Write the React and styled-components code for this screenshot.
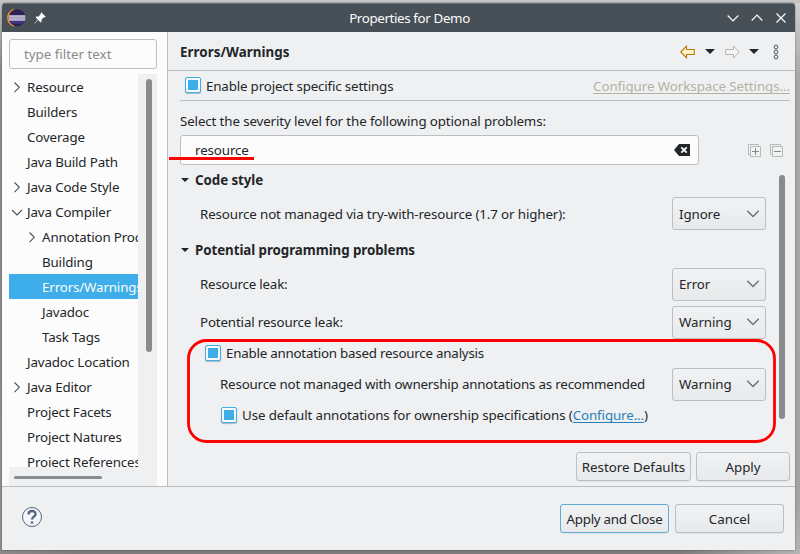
import React from "react";
import styled, { createGlobalStyle, css } from "styled-components";

const GlobalStyle = createGlobalStyle`
  * { box-sizing: border-box; }
  body {
    margin: 0;
    width: 800px;
    height: 554px;
    overflow: hidden;
    font-family: "Noto Sans", sans-serif;
    font-size: 13.33px;
    line-height: 18px;
    color: #232629;
    background: #9c9a9a;
  }
`;

const Desktop = styled.div`
  width: 800px;
  height: 554px;
  padding: 3px 5px 4px 2px;
  background:
    linear-gradient(to bottom, #c8c8c8, #c0c0c0) 0 0 / 800px 3px no-repeat,
    linear-gradient(to right, #8b8989, #7d7b7b 10%, #7d7b7b 85%, #b5b4b4) 0 550px / 800px 4px no-repeat,
    linear-gradient(to bottom, #d2d2d2, #aaa8a7 14%, #a5a3a1 90%, #b5b4b4) 795px 0 / 5px 554px no-repeat,
    linear-gradient(to bottom, #c4c4c4, #8e8e8e 12%, #929090);
`;

const Window = styled.div`
  position: relative;
  display: flex;
  flex-direction: column;
  width: 793px;
  height: 547px;
  background: #eff0f1;
  border-radius: 4px 4px 0 0;
  overflow: hidden;
  box-shadow: 0 0 2px rgba(0, 0, 0, 0.45);
`;

const TitleBar = styled.header`
  display: flex;
  align-items: center;
  height: 29px;
  flex: none;
  padding: 0 8px 1px 3px;
  background: #475057;
  border-top: 1px solid #657078;
  color: #fcfcfc;
`;

const TitleSide = styled.div`
  display: flex;
  align-items: center;
  width: 84px;
  gap: ${(p) => p.$gap}px;
  justify-content: ${(p) => (p.$end ? "flex-end" : "flex-start")};
`;

const Title = styled.div`
  flex: 1;
  padding-left: 27px;
  text-align: center;
  letter-spacing: -0.36px;
`;

const Body = styled.div`
  display: flex;
  height: 455px;
  flex: none;
  border-bottom: 1px solid #bcbec0;
`;

const Sidebar = styled.aside`
  display: flex;
  flex-direction: column;
  width: 166px;
  flex: none;
  padding: 7px 10px 0 7px;
  gap: 5px;
  background: #fcfcfc;
  border-right: 1px solid #bcbec0;
`;

const Field = styled.div`
  display: flex;
  align-items: center;
  width: ${(p) => p.$width}px;
  height: 30px;
  flex: none;
  padding: 0 8px 1px 14px;
  background: #fcfcfc;
  border: 1px solid #bcbec0;
  border-radius: 3px;
  color: ${(p) => (p.$placeholder ? "#898b8d" : "#232629")};
`;

const Spacer = styled.div`
  flex: 1;
`;

const TreeArea = styled.div`
  display: grid;
  grid-template-columns: 129px 19px;
  grid-template-rows: 393px 19px;
  background: #eff0f1;
`;

const Tree = styled.div`
  overflow: hidden;
  background: #fcfcfc;
  letter-spacing: -0.14px;
`;

const TreeRow = styled.div`
  display: flex;
  align-items: center;
  height: 25px;
  padding-left: ${(p) => 3 + p.$depth * 15}px;
  white-space: nowrap;
  ${(p) =>
    p.$selected &&
    css`
      background: #3daee9;
      color: #fcfcfc;
    `}
`;

const Twisty = styled.svg`
  width: 10px;
  height: 12px;
  margin-right: 5px;
  flex: none;
  overflow: visible;
  fill: none;
  stroke: #4d5052;
  stroke-width: 1.1;
`;

const VThumb = styled.div`
  width: 6px;
  height: ${(p) => p.$length}px;
  border-radius: 3px;
  background: #898b8d;
`;

const TreeVTrack = styled.div`
  padding: 5px 0 0 8px;
`;

const TreeHTrack = styled.div`
  padding: 9px 0 0 5px;
`;

const HThumb = styled.div`
  width: 88px;
  height: 3px;
  border-radius: 2px;
  background: #898b8d;
`;

const Main = styled.main`
  display: flex;
  flex-direction: column;
  width: 627px;
`;

const PageHeader = styled.div`
  display: flex;
  align-items: center;
  height: 39px;
  flex: none;
  padding: 1px 16px 0 12px;
  border-bottom: 1px solid #bcbec0;
`;

const Heading = styled.h1`
  margin: 0;
  font-size: 13.33px;
  font-weight: 700;
  letter-spacing: 0.06px;
`;

const Nav = styled.div`
  display: flex;
  align-items: center;
  margin-left: auto;
`;

const Page = styled.div`
  display: flex;
  flex-direction: column;
  padding: 0 5px 0 12px;
`;

const ProjectRow = styled.div`
  display: flex;
  align-items: center;
  height: 30px;
  padding-left: 5px;
  border-bottom: 1px solid #bcbec0;
`;

const CheckLabel = styled.div`
  display: flex;
  align-items: center;
  gap: 5px;
  white-space: nowrap;
`;

const Text = styled.span`
  letter-spacing: ${(p) => p.$track}px;
  white-space: nowrap;
`;

const Box = styled.span`
  display: block;
  width: 16px;
  height: 16px;
  flex: none;
  margin-top: -1px;
  padding: 2px;
  border: 1px solid #3daee9;
  border-radius: 2px;
  background: #3daee9 content-box;
  box-shadow: 0 1px 1px rgba(0, 0, 0, 0.25), inset 0 0 0 2px #f8f9fa;
`;

const Link = styled.span`
  color: ${(p) => (p.$muted ? "#b5b0a3" : "#2980b9")};
  letter-spacing: ${(p) => (p.$muted ? "-0.07px" : "inherit")};
  text-decoration: underline;
  text-underline-offset: 2px;
  text-decoration-thickness: 1px;
  text-decoration-skip-ink: none;
`;

const Prompt = styled.div`
  height: 34px;
  padding-top: 11px;
`;

const SearchRow = styled.div`
  display: flex;
  align-items: center;
  height: 30px;
`;

const TreeTools = styled.div`
  display: flex;
  gap: 9px;
  margin-left: 49px;
`;

const Scroller = styled.div`
  display: flex;
  height: 281px;
  padding-right: 5px;
  justify-content: space-between;
`;

const Options = styled.div`
  display: flex;
  flex-direction: column;
  width: 586px;
`;

const ScrollTrack = styled.div`
  padding-top: 10px;
`;

const Section = styled.h2`
  display: flex;
  align-items: center;
  gap: 6px;
  height: 30px;
  margin: 0;
  padding-left: 1px;
  font-size: 13.33px;
  font-weight: 700;
  letter-spacing: -0.06px;

  div + & {
    margin-top: 3px;
  }
`;

const Option = styled.div`
  display: flex;
  align-items: center;
  justify-content: space-between;
  height: ${(p) => p.$height}px;
  padding-left: ${(p) => p.$indent}px;
  white-space: nowrap;
`;

const buttonFace = css`
  border: 1px solid #bcbec0;
  border-radius: 3px;
  background: linear-gradient(#f1f2f3, #e8e9ea);
`;

const Select = styled.div`
  ${buttonFace}
  display: flex;
  align-items: center;
  justify-content: space-between;
  width: 94px;
  height: 33px;
  padding: 0 6px;
  letter-spacing: -0.1px;
`;

const Button = styled.div`
  ${buttonFace}
  display: flex;
  align-items: center;
  justify-content: center;
  width: ${(p) => p.$width}px;
  height: 29px;
  white-space: nowrap;
  box-shadow: 0 1px 0 rgba(0, 0, 0, 0.05);
  ${(p) => p.$primary && "border-color: #60acd3; letter-spacing: -0.26px;"}
`;

const PageButtons = styled.div`
  display: flex;
  justify-content: flex-end;
  gap: 5px;
  padding-top: 6px;
`;

const Footer = styled.footer`
  display: flex;
  align-items: center;
  flex: 1;
  gap: 6px;
  padding: 0 11px 0 19px;
`;

const HelpIcon = styled.svg`
  width: 22px;
  height: 22px;
  margin-bottom: 3px;
  fill: none;
  stroke: #536480;
`;

const Underline = styled.div`
  position: absolute;
  left: 167px;
  top: 154px;
  width: 85px;
  height: 3px;
  background: #fe0000;
`;

const Outline = styled.svg`
  position: absolute;
  left: 184px;
  top: 334px;
  width: 592px;
  height: 108px;
  fill: none;
  stroke: #fe0000;
`;

const tree = [
  ["Resource", 0, "closed"],
  ["Builders", 0],
  ["Coverage", 0],
  ["Java Build Path", 0],
  ["Java Code Style", 0, "closed"],
  ["Java Compiler", 0, "open"],
  ["Annotation Processing", 1, "closed"],
  ["Building", 1],
  ["Errors/Warnings", 1],
  ["Javadoc", 1],
  ["Task Tags", 1],
  ["Javadoc Location", 0],
  ["Java Editor", 0, "closed"],
  ["Project Facets", 0],
  ["Project Natures", 0],
  ["Project References", 0],
];

const twistyPath = { closed: "M2.5 1.5L7.3 6.3L2.5 11.1", open: "M0 4L5 9L10 4" };

function Eclipse() {
  return (
    <svg width="21" height="20" viewBox="0 0 21 20">
      <path d="M9 1.3A8.8 8.8 0 0 0 9 18.2A10.5 10.5 0 0 1 9 1.3Z" fill="#f7941e" stroke="#f7941e" strokeWidth="1" />
      <circle cx="12" cy="9.8" r="8.5" fill="#2c2255" />
      <path d="M4 12.5H20A8.5 8.5 0 0 1 18 15.5H6Z" fill="#423484" />
      <path d="M4 6.9H20L20.4 9.8L20 12.9H4L3.6 9.8Z" fill="#a49fc2" />
      <path d="M3.8 8.4H20.2M3.8 11H20.2" stroke="#c4bfd6" strokeWidth=".8" />
    </svg>
  );
}

function Pin() {
  return (
    <svg width="12" height="12" viewBox="0 0 12 12">
      <path d="M7.2.3L11.7 4.8L10.5 5.4L9.9 5.2L7.6 7.5L7.5 9.7L6.6 10.4L4.2 8L.8 11.6L.4 11.2L3.8 7.7L1.6 5.4L2.3 4.5L4.5 4.4L6.8 2.1L6.6 1.5Z" fill="#fcfcfc" />
    </svg>
  );
}

function WindowIcon({ d }) {
  return (
    <svg width="12" height="12" viewBox="0 0 12 12" fill="none" stroke="#fcfcfc" strokeWidth="1.2">
      <path d={d} />
    </svg>
  );
}

function Arrow({ back }) {
  return (
    <svg width="15" height="14" viewBox="0 0 15 14">
      <defs>
        <linearGradient id="gold" x2="0" y2="1">
          <stop stopColor="#fffdf0" />
          <stop offset="1" stopColor="#ffe59a" />
        </linearGradient>
      </defs>
      {back ? (
        <path d="M.8 7L6.5 1.1V4.5H14.3V9.5H6.5V12.9Z" fill="url(#gold)" stroke="#b8791a" strokeWidth="1.1" />
      ) : (
        <path d="M14.2 7L8.5 1.1V4.5H.7V9.5H8.5V12.9Z" fill="#f5f5f5" stroke="#b2b2b2" />
      )}
    </svg>
  );
}

const Gap = styled.span`
  width: ${(p) => p.$w}px;
`;

function Caret({ w = 10, h = 5 }) {
  return (
    <svg width={w} height={h} viewBox="0 0 10 5" preserveAspectRatio="none">
      <path d="M0 0H10L5 5Z" fill="#232629" />
    </svg>
  );
}

function TreeToggle({ plus }) {
  return (
    <svg width="13" height="13" viewBox="0 0 13 13" fill="none" stroke="#b7b9ba">
      <path d="M2.5 10.5H.5V.5H10.5V2.5" />
      <path d="M2.5 2.5H12.5V12.5H2.5Z" fill="#f2f3f3" />
      <path d={plus ? "M4 7.5H11M7.5 4V11" : "M4 7.5H11"} stroke="#85878a" />
    </svg>
  );
}

function Dropdown({ children }) {
  return (
    <Select>
      {children}
      <svg width="12" height="8" viewBox="0 0 12 8" fill="none" stroke="#6d7073" strokeWidth="1.3">
        <path d="M.3 .8L6 6.5L11.7 .8" />
      </svg>
    </Select>
  );
}

export default function App() {
  return (
    <Desktop>
      <GlobalStyle />
      <Window>
        <TitleBar>
          <TitleSide $gap={8}>
            <Eclipse />
            <Pin />
          </TitleSide>
          <Title>Properties for Demo</Title>
          <TitleSide $gap={12} $end>
            <WindowIcon d="M.7 3.5L6 8.8L11.3 3.5" />
            <WindowIcon d="M.7 8.5L6 3.2L11.3 8.5" />
            <WindowIcon d="M1.5 1.5L10.5 10.5M10.5 1.5L1.5 10.5" />
          </TitleSide>
        </TitleBar>
        <Body>
          <Sidebar>
            <Field $width={148} $placeholder>type filter text</Field>
            <TreeArea>
              <Tree>
                {tree.map(([name, depth, state]) => (
                  <TreeRow key={name} $depth={depth} $selected={name === "Errors/Warnings"}>
                    <Twisty viewBox="0 0 10 12">{state && <path d={twistyPath[state]} />}</Twisty>
                    {name}
                  </TreeRow>
                ))}
              </Tree>
              <TreeVTrack>
                <VThumb $length={273} />
              </TreeVTrack>
              <TreeHTrack>
                <HThumb />
              </TreeHTrack>
            </TreeArea>
          </Sidebar>
          <Main>
            <PageHeader>
              <Heading>Errors/Warnings</Heading>
              <Nav>
                <Arrow back />
                <Gap $w={10} />
                <Caret />
                <Gap $w={10} />
                <Arrow />
                <Gap $w={9} />
                <Caret />
                <Gap $w={14} />
                <svg width="6" height="16" viewBox="0 0 6 16" fill="none" stroke="#55585a">
                  <circle cx="3" cy="3" r="1.9" />
                  <circle cx="3" cy="8" r="1.9" />
                  <circle cx="3" cy="13" r="1.9" />
                </svg>
              </Nav>
            </PageHeader>
            <Page>
              <ProjectRow>
                <CheckLabel>
                  <Box />
                  <Text $track={-0.16}>Enable project specific settings</Text>
                </CheckLabel>
                <Spacer />
                <Link $muted>Configure Workspace Settings...</Link>
              </ProjectRow>
              <Prompt>
                <Text $track={-0.12}>Select the severity level for the following optional problems:</Text>
              </Prompt>
              <SearchRow>
                <Field $width={519}>
                  <Text $track={-0.1}>resource</Text>
                  <Spacer />
                  <svg width="16" height="12" viewBox="0 0 16 12">
                    <path d="M5 0H16V12H5L0 6Z" fill="#232629" />
                    <path d="M7.3 3.3L12.7 8.7M12.7 3.3L7.3 8.7" stroke="#fcfcfc" strokeWidth="1.8" />
                  </svg>
                </Field>
                <TreeTools>
                  <TreeToggle plus />
                  <TreeToggle />
                </TreeTools>
              </SearchRow>
              <Scroller>
                <Options>
                  <Section><Caret w={8} h={4} />Code style</Section>
                  <Option $height={37} $indent={20}>
                    <Text $track={-0.12}>Resource not managed via try-with-resource (1.7 or higher):</Text>
                    <Dropdown>Ignore</Dropdown>
                  </Option>
                  <Section><Caret w={8} h={4} />Potential programming problems</Section>
                  <Option $height={38} $indent={20}>
                    <Text $track={-0.2}>Resource leak:</Text>
                    <Dropdown>Error</Dropdown>
                  </Option>
                  <Option $height={38} $indent={20}>
                    <Text $track={-0.15}>Potential resource leak:</Text>
                    <Dropdown>Warning</Dropdown>
                  </Option>
                  <Option $height={24} $indent={25}>
                    <CheckLabel>
                      <Box />
                      <Text $track={-0.22}>Enable annotation based resource analysis</Text>
                    </CheckLabel>
                  </Option>
                  <Option $height={38} $indent={40}>
                    <Text $track={-0.18}>Resource not managed with ownership annotations as recommended</Text>
                    <Dropdown>Warning</Dropdown>
                  </Option>
                  <Option $height={24} $indent={41}>
                    <CheckLabel>
                      <Box />
                      <Text $track={-0.11}>
                        Use default annotations for ownership specifications (<Link>Configure...</Link>)
                      </Text>
                    </CheckLabel>
                  </Option>
                </Options>
                <ScrollTrack>
                  <VThumb $length={244} />
                </ScrollTrack>
              </Scroller>
              <PageButtons>
                <Button $width={115}>Restore Defaults</Button>
                <Button $width={94}>Apply</Button>
              </PageButtons>
            </Page>
          </Main>
        </Body>
        <Footer>
          <HelpIcon viewBox="0 0 22 22">
            <circle cx="11" cy="11" r="9.5" fill="#f5f6f7" />
            <path d="M7.5 8.6C7.5 3.7 14.7 4.1 14.6 8.1C14.5 10.6 11 10.8 11 13.6" strokeWidth="2.3" />
            <path d="M9.8 16.5H12.2" strokeWidth="2.2" />
          </HelpIcon>
          <Spacer />
          <Button $width={109} $primary>Apply and Close</Button>
          <Button $width={109}>Cancel</Button>
        </Footer>
        <Underline />
        <Outline viewBox="0 0 592 108">
          <rect x="2.5" y="3.5" width="586" height="101" rx="18" strokeWidth="2.8" />
        </Outline>
      </Window>
    </Desktop>
  );
}
